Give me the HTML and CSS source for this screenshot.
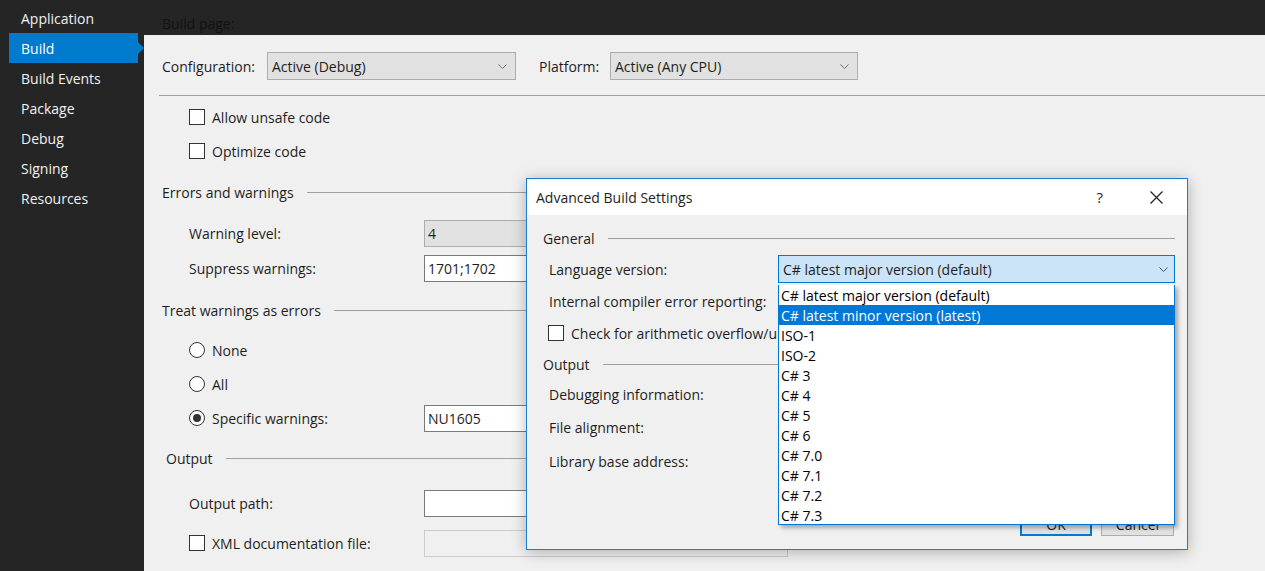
FILE: index.html
```html
<!DOCTYPE html>
<html>
<head>
<meta charset="utf-8">
<link rel="stylesheet" href="styles.css">
</head>
<body>
<div class="app">
  <nav class="sidebar">
    <div class="nav-item">Application</div>
    <div class="nav-item active">Build</div>
    <div class="nav-item">Build Events</div>
    <div class="nav-item">Package</div>
    <div class="nav-item">Debug</div>
    <div class="nav-item">Signing</div>
    <div class="nav-item">Resources</div>
  </nav>
  <main class="main">
    <div class="topband">Build page:</div>
    <div class="content">
      <div class="config-row">
        <span class="cfg-label">Configuration:</span>
        <div class="select cfg-select"><span>Active (Debug)</span><svg class="chev" width="9" height="5" viewBox="0 0 9 5"><polyline points="0.5,0.5 4.5,4.5 8.5,0.5" fill="none" stroke="#707070" stroke-width="1"/></svg></div>
        <span class="plat-label">Platform:</span>
        <div class="select plat-select"><span>Active (Any CPU)</span><svg class="chev" width="9" height="5" viewBox="0 0 9 5"><polyline points="0.5,0.5 4.5,4.5 8.5,0.5" fill="none" stroke="#707070" stroke-width="1"/></svg></div>
      </div>
      <div class="hr"></div>

      <div class="row indent mt7"><span class="check"></span><span>Allow unsafe code</span></div>
      <div class="row indent mt6"><span class="check"></span><span>Optimize code</span></div>

      <div class="row section mt13"><span>Errors and warnings</span><span class="sline"></span></div>
      <div class="row indent mt13"><span class="label">Warning level:</span><div class="field disabled">4</div></div>
      <div class="row indent mt7"><span class="label">Suppress warnings:</span><div class="field">1701;1702</div></div>

      <div class="row section mt14"><span>Treat warnings as errors</span><span class="sline"></span></div>
      <div class="row indent mt12"><span class="radio"></span><span>None</span></div>
      <div class="row indent mt6"><span class="radio"></span><span>All</span></div>
      <div class="row indent mt6"><span class="radio on"></span><span class="label-r">Specific warnings:</span><div class="field">NU1605</div></div>

      <div class="row section out mt12"><span>Output</span><span class="sline"></span></div>
      <div class="row indent mt17"><span class="label">Output path:</span><div class="field"></div></div>
      <div class="row indent mt12"><span class="check"></span><span class="label-r">XML documentation file:</span><div class="field faint"></div></div>
    </div>
  </main>
</div>

<div class="dialog">
  <div class="dlg-title">
    <span class="dlg-name">Advanced Build Settings</span>
    <span class="dlg-help">?</span>
    <svg class="dlg-close" width="13" height="13" viewBox="0 0 13 13"><path d="M0.5 0.5 L12.5 12.5 M12.5 0.5 L0.5 12.5" stroke="#1e1e1e" stroke-width="1.2" fill="none"/></svg>
  </div>
  <div class="dlg-body">
    <div class="row section dsec"><span>General</span><span class="sline dl"></span></div>
    <div class="row dind dm3"><span class="dlabel">Language version:</span>
      <div class="select lang-select"><span>C# latest major version (default)</span><svg class="chev" width="9" height="5" viewBox="0 0 9 5"><polyline points="0.5,0.5 4.5,4.5 8.5,0.5" fill="none" stroke="#505050" stroke-width="1"/></svg></div>
    </div>
    <div class="row dind dm4"><span>Internal compiler error reporting:</span></div>
    <div class="row dind dm4"><span class="check"></span><span>Check for arithmetic overflow/underflow</span></div>
    <div class="row section dsec dm3"><span>Output</span><span class="sline dl"></span></div>
    <div class="row dind dm2"><span>Debugging information:</span></div>
    <div class="row dind dm5"><span>File alignment:</span></div>
    <div class="row dind dm6"><span>Library base address:</span></div>
    <div class="buttons">
      <div class="btn primary">OK</div>
      <div class="btn">Cancel</div>
    </div>
  </div>
  <ul class="dropdown">
    <li>C# latest major version (default)</li>
    <li class="sel">C# latest minor version (latest)</li>
    <li>ISO-1</li>
    <li>ISO-2</li>
    <li>C# 3</li>
    <li>C# 4</li>
    <li>C# 5</li>
    <li>C# 6</li>
    <li>C# 7.0</li>
    <li>C# 7.1</li>
    <li>C# 7.2</li>
    <li>C# 7.3</li>
  </ul>
</div>
</body>
</html>
```

FILE: styles.css
```css
* { box-sizing: border-box; }
html, body {
  margin: 0;
  padding: 0;
  width: 1265px;
  height: 571px;
  overflow: hidden;
  background: #f0f0f0;
  font-family: "Open Sans", "Noto Sans", sans-serif;
  font-size: 14px;
  color: #1e1e1e;
}
.app {
  display: flex;
  height: 571px;
  position: relative;
}
.sidebar {
  width: 144px;
  flex: none;
  background: #252526;
  padding-top: 3px;
}
.nav-item {
  position: relative;
  height: 30px;
  line-height: 30px;
  padding-top: 1px;
  margin-left: 9px;
  width: 129px;
  padding-left: 12px;
  color: #f1f1f1;
}
.nav-item.active {
  background: #007acc;
  color: #fff;
}
.nav-item.active::after {
  content: "";
  position: absolute;
  right: -6px;
  top: 9px;
  border-top: 6px solid transparent;
  border-bottom: 6px solid transparent;
  border-left: 6px solid #007acc;
}
.main {
  flex: 1;
  display: flex;
  flex-direction: column;
}
.topband {
  height: 35px;
  background: #252526;
  color: #121212;
  padding-left: 18px;
  padding-top: 14px;
  line-height: 20px;
}
.content {
  padding-left: 18px;
}
.config-row {
  display: flex;
  align-items: center;
  height: 28px;
  margin-top: 17px;
}
.cfg-label { width: 105px; }
.plat-label { width: 71px; margin-left: 23px; }
.select {
  height: 28px;
  display: flex;
  align-items: center;
  justify-content: space-between;
  padding: 1px 8px 0 4px;
  background: #e1e1e1;
  border: 1px solid #adadad;
}
.cfg-select { width: 249px; }
.plat-select { width: 248px; }
.chev { flex: none; }
.hr {
  height: 1px;
  background: #a0a0a0;
  margin-top: 15px;
  margin-left: -3px;
}
.row {
  height: 28px;
  display: flex;
  align-items: center;
  white-space: nowrap;
}
.indent { padding-left: 27px; }
.mt6 { margin-top: 6px; }
.mt7 { margin-top: 7px; }
.mt12 { margin-top: 12px; }
.mt13 { margin-top: 13px; }
.mt14 { margin-top: 14px; }
.mt17 { margin-top: 17px; }
.check {
  width: 16px;
  height: 16px;
  border: 1px solid #333;
  background: #fff;
  margin-right: 7px;
  flex: none;
}
.radio {
  width: 16px;
  height: 16px;
  border: 1px solid #333;
  border-radius: 50%;
  background: #fff;
  margin-right: 7px;
  flex: none;
  display: flex;
  align-items: center;
  justify-content: center;
}
.radio.on::after {
  content: "";
  width: 8px;
  height: 8px;
  border-radius: 50%;
  background: #333;
}
.label { width: 235px; flex: none; }
.label-r { width: 212px; flex: none; }
.field {
  width: 380px;
  height: 27px;
  border: 1px solid #7a7a7a;
  background: #fff;
  padding-left: 3px;
  line-height: 25px;
  flex: none;
}
.field.disabled {
  background: #e1e1e1;
  border-color: #adadad;
}
.field.faint {
  width: 364px;
  background: #f0f0f0;
  border-color: #cccccc;
}
.section { gap: 13px; }
.section.out { padding-left: 4px; }
.sline {
  flex: 1;
  height: 1px;
  background: #a0a0a0;
  margin-right: 100px;
}

/* dialog */
.dialog {
  position: absolute;
  left: 526px;
  top: 178px;
  width: 662px;
  height: 372px;
  border: 1px solid #1a7fd4;
  background: #f0f0f0;
  box-shadow: 0 2px 14px rgba(0, 0, 0, 0.28);
}
.dlg-title {
  height: 36px;
  background: #fff;
  display: flex;
  align-items: center;
  padding-left: 9px;
}
.dlg-name { flex: 1; }
.dlg-help {
  font-size: 15px;
  margin-right: 47px;
}
.dlg-close { margin-right: 24px; }
.dlg-body {
  padding: 9px 12px 0 16px;
}
.dsec { gap: 13px; }
.sline.dl { margin-right: 0; }
.dind { padding-left: 6px; }
.dind .check { margin-left: -1px; margin-right: 7px; }
.dlabel { width: 229px; flex: none; }
.dm2 { margin-top: 2px; }
.dm3 { margin-top: 3px; }
.dm4 { margin-top: 4px; }
.dm5 { margin-top: 5px; }
.dm6 { margin-top: 6px; }
.lang-select {
  width: 397px;
  background: #cce4f7;
  border-color: #0078d7;
  padding-right: 6px;
}
.buttons {
  display: flex;
  justify-content: flex-end;
  gap: 9px;
  margin-top: 28px;
  padding-right: 1px;
}
.btn {
  width: 73px;
  height: 33px;
  border: 1px solid #adadad;
  background: #e1e1e1;
  display: flex;
  align-items: center;
  justify-content: center;
  padding-top: 9px;
}
.btn.primary {
  border: 2px solid #0078d7;
  width: 72px;
}
.dropdown {
  position: absolute;
  left: 251px;
  top: 106px;
  width: 397px;
  height: 240px;
  margin: 0;
  padding: 0;
  list-style: none;
  background: #fff;
  border: 1px solid #0078d7;
  border-top: none;
  box-shadow: 3px 3px 4px rgba(0, 0, 0, 0.3);
  z-index: 2;
}
.dropdown li {
  height: 20px;
  line-height: 20px;
  padding-top: 1px;
  padding-left: 2px;
  color: #000;
}
.dropdown li.sel {
  background: #0078d7;
  color: #fff;
}
```
